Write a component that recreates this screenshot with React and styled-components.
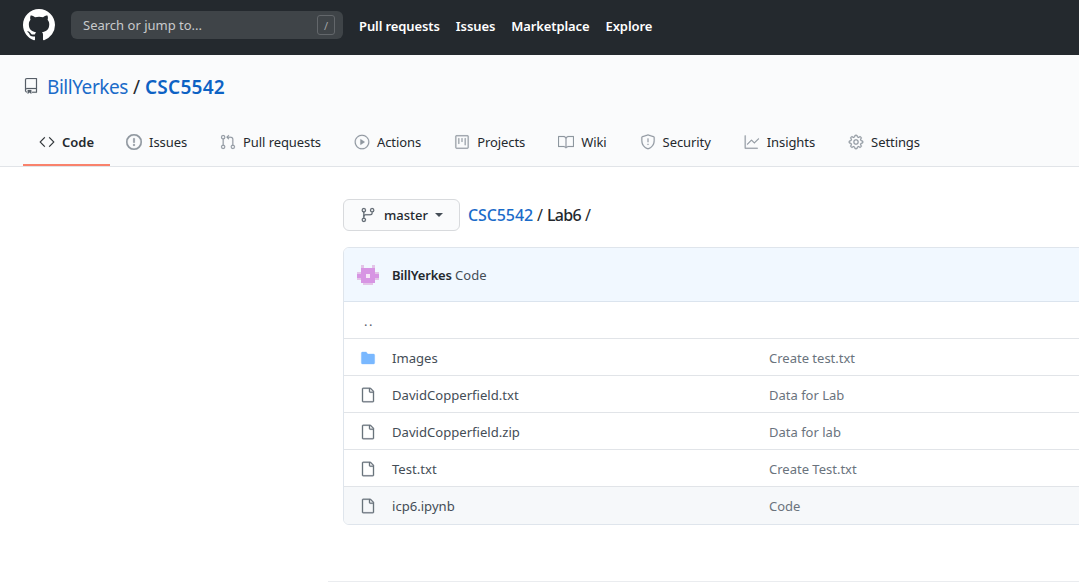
import React from 'react';
import styled, { createGlobalStyle } from 'styled-components';
import {
  GoRepo, GoCode, GoGitPullRequest, GoPlay, GoProject,
  GoBook, GoShield, GoGraph, GoGear, GoGitBranch, GoFile, GoFileDirectoryFill,
} from 'react-icons/go';

const Global = createGlobalStyle`
  html, body { margin: 0; padding: 0; background: #fff; overflow: hidden; }
  body { font-family: "Noto Sans", "Open Sans", sans-serif; font-size: 13px; color: #24292e; }
  * { box-sizing: border-box; }
`;

const Page = styled.div`
  width: 1079px;
  height: 587px;
  overflow: hidden;
  display: flex;
  flex-direction: column;
`;

const TopBar = styled.header`
  height: 55px;
  background: #24292e;
  display: flex;
  align-items: center;
  padding: 0 0 5px 23px;
  color: #fff;
`;

const Logo = styled.svg`
  width: 32px;
  height: 32px;
  margin-right: 16px;
  fill: #fff;
`;

const Search = styled.div`
  width: 272px;
  height: 28px;
  background: #3f4448;
  border-radius: 6px;
  display: flex;
  align-items: center;
  justify-content: space-between;
  padding: 0 8px 0 12px;
  color: #c8cacc;
  margin-right: 16px;
`;

const SlashKey = styled.span`
  width: 18px;
  height: 20px;
  border: 1px solid #63676b;
  border-radius: 3px;
  font-size: 11px;
  color: #a0a3a6;
  display: flex;
  align-items: center;
  justify-content: center;
`;

const TopLink = styled.a`
  font-weight: 600;
  color: #fff;
  margin-right: 16px;
  padding-top: 1px;
  letter-spacing: -0.1px;
  white-space: nowrap;
`;

const RepoHead = styled.section`
  height: 112px;
  background: #fafbfc;
  border-bottom: 1px solid #e1e4e8;
  padding: 0 0 0 23px;
  display: flex;
  flex-direction: column;
`;

const Title = styled.div`
  height: 65px;
  display: flex;
  align-items: center;
  font-size: 19px;
  color: #24292e;
`;

const RepoIcon = styled(GoRepo)`
  font-size: 16px;
  color: #586069;
  margin: -2px 8px 0 0;
  stroke: currentColor;
  stroke-width: 0.3;
`;

const Owner = styled.a`
  color: #1a6bc9;
  letter-spacing: -0.45px;
`;

const RepoName = styled.a`
  color: #0d62c4;
  font-weight: 600;
  letter-spacing: 0.25px;
`;

const Slash = styled.span`
  margin: 0 5px;
`;

const Tabs = styled.nav`
  margin-top: auto;
  display: flex;
  height: 47px;
`;

const Tab = styled.a`
  height: 47px;
  padding: 0 16px;
  display: flex;
  align-items: center;
  gap: 7px;
  color: #24292e;
  font-weight: ${(props) => (props.$active ? 600 : 400)};
  letter-spacing: ${(props) => (props.$active ? '0' : '-0.08px')};
  border-bottom: 2px solid ${(props) => (props.$active ? '#f9826c' : 'transparent')};
  margin: 0 ${(props) => (props.$active ? '0' : '1px')} -1px 0;
  white-space: nowrap;
  svg {
    width: 16px;
    height: 16px;
    fill: currentColor;
    color: ${(props) => (props.$active ? '#24292e' : '#8f979f')};
    stroke: currentColor;
    stroke-width: 0.25;
  }
`;

const Main = styled.main`
  flex: 1;
  padding: 32px 0 0 343px;
  display: flex;
  flex-direction: column;
`;

const PathBar = styled.div`
  display: flex;
  align-items: center;
  height: 32px;
  margin-bottom: 16px;
  font-size: 16px;
`;

const BranchButton = styled.button`
  width: 117px;
  height: 32px;
  padding: 0 0 0 16px;
  margin-right: 8px;
  background: #fafbfc;
  border: 1px solid #d8dadd;
  border-radius: 6px;
  display: flex;
  align-items: center;
  font: inherit;
  font-size: 13px;
  font-weight: 500;
  color: #24292e;
  svg {
    font-size: 16px;
    color: #586069;
    margin-right: 8px;
    stroke: currentColor;
    stroke-width: 0.3;
  }
`;

const Caret = styled.span`
  margin-left: 7px;
  border: 4px solid transparent;
  border-top-color: #444d56;
  border-bottom: 0;
`;

const Crumb = styled.a`
  color: #1a6bc9;
  font-weight: 500;
  letter-spacing: -0.1px;
`;

const CrumbSep = styled.span`
  margin: 0 4px;
`;

const CrumbCurrent = styled.span`
  font-weight: 500;
  letter-spacing: -0.7px;
`;

const Table = styled.div`
  width: 980px;
  border: 1px solid #dfe5ec;
  border-radius: 6px;
  overflow: hidden;
`;

const CommitRow = styled.div`
  height: 54px;
  background: #f1f8ff;
  border-bottom: 1px solid #dbe4ee;
  display: flex;
  align-items: center;
  padding-left: 13px;
  gap: 13px;
`;

const CommitAuthor = styled.span`
  font-weight: 600;
  letter-spacing: -0.2px;
`;

const CommitMessage = styled.span`
  color: #444d56;
`;

const FileRow = styled.div`
  height: ${(props) => (props.$first ? '36px' : props.$last ? '38px' : '37px')};
  display: flex;
  align-items: center;
  padding: ${(props) => (props.$last ? '0' : '1px')} 0 0 16px;
  background: ${(props) => (props.$hover ? '#f6f8fa' : '#fff')};
  border-top: ${(props) => (props.$first ? 'none' : '1px solid #e1e4e8')};
`;

const IconCell = styled.span`
  width: 32px;
  display: flex;
  align-items: center;
  svg {
    font-size: 16px;
    color: ${(props) => (props.$folder ? '#79b8ff' : '#6a737d')};
    stroke: currentColor;
    stroke-width: 0.5;
  }
`;

const UpDir = styled.span`
  padding: 1px 0 0 4px;
  letter-spacing: 1.5px;
  color: #586069;
`;

const NameCell = styled.span`
  width: 377px;
  font-size: 13.1px;
  color: #444d56;
`;

const Message = styled.span`
  color: #6a737d;
`;

const Footer = styled.footer`
  margin: auto 0 5px -15px;
  border-top: 1px solid #eaecef;
  height: 1px;
`;

const IssueIcon = () => (
  <svg viewBox="0 0 16 16">
    <path d="M8 1.5a6.5 6.5 0 100 13 6.5 6.5 0 000-13zM0 8a8 8 0 1116 0A8 8 0 010 8zm9 3a1 1 0 11-2 0 1 1 0 012 0zm-.25-6.25a.75.75 0 00-1.5 0v3.5a.75.75 0 001.5 0v-3.5z" />
  </svg>
);

const tabs = [
  { label: 'Code', icon: GoCode, active: true },
  { label: 'Issues', icon: IssueIcon },
  { label: 'Pull requests', icon: GoGitPullRequest },
  { label: 'Actions', icon: GoPlay },
  { label: 'Projects', icon: GoProject },
  { label: 'Wiki', icon: GoBook },
  { label: 'Security', icon: GoShield },
  { label: 'Insights', icon: GoGraph },
  { label: 'Settings', icon: GoGear },
];

const files = [
  { name: 'Images', message: 'Create test.txt', folder: true },
  { name: 'DavidCopperfield.txt', message: 'Data for Lab' },
  { name: 'DavidCopperfield.zip', message: 'Data for lab' },
  { name: 'Test.txt', message: 'Create Test.txt' },
  { name: 'icp6.ipynb', message: 'Code', hover: true, last: true },
];

const Identicon = () => (
  <svg width="22" height="22" viewBox="0 0 11 11">
    <path fill="#e3c4e8" d="M2 .5h1.5V2H2zM7.5.5H9V2H7.5zM0 4h2v1H0zM9 4h2v1H9zM0 7h2v1H0zM9 7h2v1H9zM3 9.5h5v1H3z" />
    <path fill="#d795e3" d="M2 2h7v2H2zM0 5h11v2H0zM2 4h7v1H2zM2 7h7v2.5H2z" />
    <path fill="#f6e6f8" d="M4.5 5h2v2h-2z" />
  </svg>
);

export default function App() {
  return (
    <Page>
      <Global />
      <TopBar>
        <Logo viewBox="0 0 16 16">
          <path d="M8 0C3.58 0 0 3.58 0 8c0 3.54 2.29 6.53 5.47 7.59.4.07.55-.17.55-.38 0-.19-.01-.82-.01-1.49-2.01.37-2.53-.49-2.69-.94-.09-.23-.48-.94-.82-1.13-.28-.15-.68-.52-.01-.53.63-.01 1.08.58 1.23.82.72 1.21 1.87.87 2.33.66.07-.52.28-.87.51-1.07-1.78-.2-3.64-.89-3.64-3.95 0-.87.31-1.59.82-2.15-.08-.2-.36-1.02.08-2.12 0 0 .67-.21 2.2.82.64-.18 1.32-.27 2-.27.68 0 1.36.09 2 .27 1.53-1.04 2.2-.82 2.2-.82.44 1.1.16 1.92.08 2.12.51.56.82 1.27.82 2.15 0 3.07-1.87 3.75-3.65 3.95.29.25.54.73.54 1.48 0 1.07-.01 1.93-.01 2.2 0 .21.15.46.55.38A8.013 8.013 0 0016 8c0-4.42-3.58-8-8-8z" />
        </Logo>
        <Search>
          Search or jump to...
          <SlashKey>/</SlashKey>
        </Search>
        {['Pull requests', 'Issues', 'Marketplace', 'Explore'].map((l) => (
          <TopLink key={l}>{l}</TopLink>
        ))}
      </TopBar>
      <RepoHead>
        <Title>
          <RepoIcon />
          <Owner>BillYerkes</Owner>
          <Slash>/</Slash>
          <RepoName>CSC5542</RepoName>
        </Title>
        <Tabs>
          {tabs.map(({ label, icon: Icon, active }) => (
            <Tab key={label} $active={active}>
              <Icon />
              {label}
            </Tab>
          ))}
        </Tabs>
      </RepoHead>
      <Main>
        <PathBar>
          <BranchButton>
            <GoGitBranch />
            master
            <Caret />
          </BranchButton>
          <Crumb>CSC5542</Crumb>
          <CrumbSep>/</CrumbSep>
          <CrumbCurrent>Lab6</CrumbCurrent>
          <CrumbSep>/</CrumbSep>
        </PathBar>
        <Table>
          <CommitRow>
            <Identicon />
            <span>
              <CommitAuthor>BillYerkes</CommitAuthor> <CommitMessage>Code</CommitMessage>
            </span>
          </CommitRow>
          <FileRow $first>
            <UpDir>..</UpDir>
          </FileRow>
          {files.map((f) => (
            <FileRow key={f.name} $hover={f.hover} $last={f.last}>
              <IconCell $folder={f.folder}>
                {f.folder ? <GoFileDirectoryFill /> : <GoFile />}
              </IconCell>
              <NameCell>{f.name}</NameCell>
              <Message>{f.message}</Message>
            </FileRow>
          ))}
        </Table>
        <Footer />
      </Main>
    </Page>
  );
}
